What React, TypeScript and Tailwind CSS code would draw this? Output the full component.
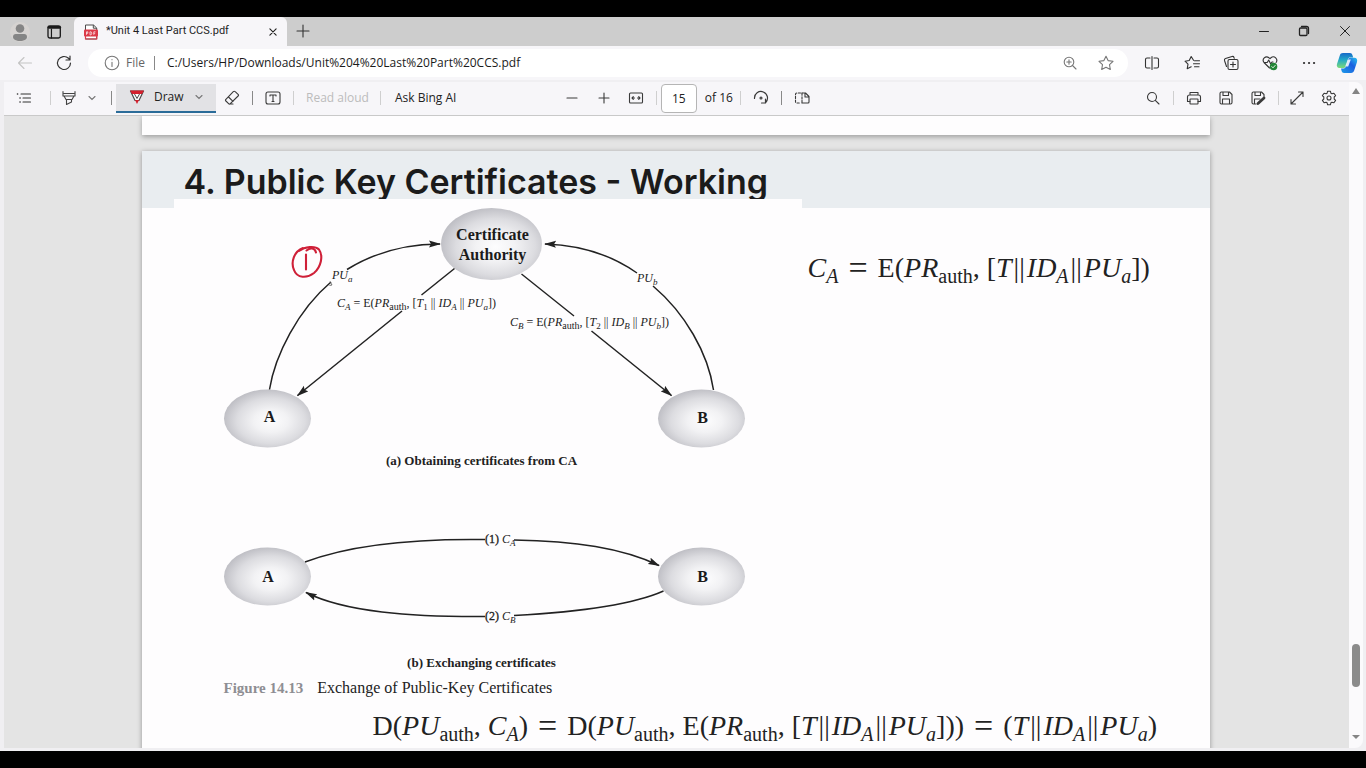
import type { ReactNode } from "react";

const ui = "font-['Open_Sans','Noto_Sans',sans-serif]";
const serif = "font-['Liberation_Serif',serif]";

function Icon({ children, className = "size-4" }: { children: ReactNode; className?: string }) {
  return (
    <svg
      viewBox="0 0 16 16"
      className={className}
      fill="none"
      stroke="currentColor"
      strokeWidth="1.1"
      strokeLinecap="round"
      strokeLinejoin="round"
      aria-hidden="true"
    >
      {children}
    </svg>
  );
}

function IconButton({
  label,
  children,
  className = "w-8 text-[#3a3a3a]",
}: {
  label: string;
  children: ReactNode;
  className?: string;
}) {
  return (
    <button type="button" aria-label={label} className={`flex h-7 shrink-0 items-center justify-center ${className}`}>
      {children}
    </button>
  );
}

function Divider({ className = "mx-1 bg-[#cfcfcf]" }: { className?: string }) {
  return <span className={`h-3.5 w-px shrink-0 ${className}`} />;
}

function Chevron() {
  return (
    <svg viewBox="0 0 8 8" className="size-2" fill="none" stroke="#777" strokeWidth="1.1" strokeLinecap="round" aria-hidden="true">
      <path d="M1 2.5 4 5.5 7 2.5" />
    </svg>
  );
}

function TitleBar() {
  return (
    <header className="flex h-[29px] shrink-0 items-stretch bg-[#cdcdcd]">
      <div className="flex w-[74px] shrink-0 items-center gap-3 pl-[10px]">
        <button type="button" aria-label="Profile">
          <svg viewBox="0 0 20 20" className="size-5" aria-hidden="true">
            <circle cx="10" cy="10" r="10" fill="#d6d3d1" />
            <circle cx="10" cy="6.5" r="4.300" fill="#858585" />
            <path d="M3 15c0-2 1-3 2.800-3h8.400c1.800 0 2.800 1 2.800 3 0 2.400-3 4-7 4s-7-1.600-7-4z" fill="#858585" />
          </svg>
        </button>
        <button type="button" aria-label="Tab actions" className="text-[#1b1b1b]">
          <Icon className="size-6">
            <rect x="4" y="4" width="8.200" height="8" rx="1.200" strokeWidth=".9" />
            <path d="M6.300 6v6" strokeWidth=".8" />
            <path d="M4.600 4.900h7.200" strokeWidth="1.800" />
          </Icon>
        </button>
      </div>
      <div className="flex w-[213px] shrink-0 items-center rounded-t-md bg-[#f7f6f9] pr-2 pl-[10px]">
        <svg viewBox="0 0 14 16" className="h-4 w-3.5 shrink-0" aria-hidden="true">
          <path d="M1.500 1h8l3.200 3v11H1.500z" fill="#fff" stroke="#4a4a4a" strokeWidth="1" />
          <path d="M9.300 1v3.200h3.400" fill="none" stroke="#4a4a4a" strokeWidth="1" />
          <rect x="0" y="5.500" width="14" height="7" rx="1" fill="#dc3a48" />
          <path d="M2.500 10.800v-3h1.300v1.500H2.500M6 7.800v3h.8c1.300 0 1.300-3 0-3zM9.800 10.800v-3h1.700M9.800 9.300h1.400" fill="none" stroke="#fff" strokeWidth=".7" />
          <path d="M1.500 12v3h11.200v-3" fill="none" stroke="#dc3a48" strokeWidth="1.200" />
        </svg>
        <span className="ml-2 grow truncate font-['Roboto',sans-serif] text-[11px] text-[#1f1f1f]">*Unit 4 Last Part CCS.pdf</span>
        <button type="button" aria-label="Close tab" className="flex w-3 justify-center text-[#222]">
          <Icon className="size-2.5">
            <path d="M3 3l10 10M13 3 3 13" strokeWidth="1.800" />
          </Icon>
        </button>
      </div>
      <IconButton label="New tab" className="w-8 text-[#333]">
        <Icon>
          <path d="M8 2v12M2 8h12" />
        </Icon>
      </IconButton>
      <div className="ml-auto flex text-[#222]">
        <IconButton label="Minimize" className="w-10">
          <Icon>
            <path d="M3.500 8.500h9" strokeWidth="1" />
          </Icon>
        </IconButton>
        <IconButton label="Restore" className="w-10">
          <Icon>
            <rect x="3.500" y="5" width="7.500" height="7.500" rx="1" strokeWidth="1.300" />
            <path d="M5.500 3.500h5c1.300 0 2 .7 2 2v5" strokeWidth="1.300" />
          </Icon>
        </IconButton>
        <IconButton label="Close" className="w-[42px]">
          <Icon>
            <path d="M3.500 3.500l9 9M12.500 3.500l-9 9" strokeWidth="1" />
          </Icon>
        </IconButton>
      </div>
    </header>
  );
}

function AddressBar() {
  return (
    <div className="flex h-[34px] shrink-0 items-center bg-[#f7f6f9]">
      <IconButton label="Back" className="ml-[5px] w-10 text-[#c4c4c4]">
        <Icon>
          <path d="M14.500 8h-13M7 2.500 1.500 8 7 13.500" />
        </Icon>
      </IconButton>
      <IconButton label="Refresh" className="w-[38px] text-[#333]">
        <Icon>
          <path d="M14.500 8a6.500 6.500 0 1 1-2-4.700l1.300 1.300M14 1v4h-4" strokeWidth="1.200" />
        </Icon>
      </IconButton>
      <div className="ml-[5px] flex h-7 min-w-0 grow items-center rounded-full bg-white pl-4 text-xs">
        <span className="text-[#777]">
          <Icon>
            <circle cx="8" cy="8" r="6.800" />
            <path d="M8 7.200v4.200M8 4.500v.3" />
          </Icon>
        </span>
        <span className="ml-1.5 text-[#666]">File</span>
        <Divider className="mr-3 ml-[9px] bg-[#888]" />
        <input
          aria-label="Address"
          defaultValue="C:/Users/HP/Downloads/Unit%204%20Last%20Part%20CCS.pdf"
          className="min-w-0 grow bg-transparent text-xs text-[#1b1b1b] outline-none"
        />
        <IconButton label="Zoom" className="w-9 text-[#777]">
          <Icon>
            <circle cx="7" cy="7" r="4.800" />
            <path d="M10.500 10.500 14 14M4.800 7h4.400M7 4.800v4.400" />
          </Icon>
        </IconButton>
        <IconButton label="Add to favorites" className="mr-1 w-9 text-[#777]">
          <Icon>
            <path d="M8 1.200 10.100 5.600l4.900.7-3.500 3.400.8 4.800L8 12.200l-4.300 2.300.8-4.800L1 6.300l4.900-.7z" />
          </Icon>
        </IconButton>
      </div>
      <div className="ml-1 flex">
        <IconButton label="Split screen" className="w-10 text-[#333]">
          <Icon>
            <path d="M6 3H3C2 3 1.500 3.500 1.500 4.500v7c0 1 .5 1.500 1.500 1.500h3M10 3h3c1 0 1.500.5 1.500 1.500v7c0 1-.5 1.500-1.500 1.500h-3M8 1.500v13" />
          </Icon>
        </IconButton>
        <IconButton label="Favorites" className="w-10 text-[#333]">
          <Icon>
            <path d="M9.500 5.300 7.200 1.500 5.200 5.500l-4.200.7 3 3-.8 4.600 4-2M10.500 5.800h5M9.500 8.800h6M10.500 11.800h4.500" />
          </Icon>
        </IconButton>
        <IconButton label="Collections" className="w-[38px] text-[#333]">
          <Icon>
            <rect x="5" y="4.500" width="10" height="10" rx="1.500" />
            <path d="M10 7v5M7.500 9.500h5M3.500 11.500 1.500 5.500C1.200 4.500 1.600 3.800 2.500 3.500l6.500-2c1-.3 1.700.1 2 1l.3.800" />
          </Icon>
        </IconButton>
        <IconButton label="Browser essentials" className="w-10 text-[#333]">
          <Icon>
            <path d="M7.500 13 2 7.500C-.5 4.500 3.500 0 7 2.800l1 .9.900-.9c3.500-2.800 7.500 1.500 5.200 4.700M2.500 7.500h2.700l1.500-2.500 2 4 1.300-2h1" />
            <circle cx="11.500" cy="11.500" r="3.800" fill="#238636" stroke="none" />
            <path d="M9.800 11.600l1.200 1.200 2.200-2.400" stroke="#fff" strokeWidth=".9" />
          </Icon>
        </IconButton>
        <IconButton label="More" className="w-[38px] text-[#333]">
          <Icon>
            <path d="M3 8h.1M8 8h.1M13 8h.1" strokeWidth="2.200" />
          </Icon>
        </IconButton>
        <IconButton label="Copilot" className="w-[38px]">
          <svg viewBox="0 0 22 22" className="size-[22px]" aria-hidden="true">
            <defs>
              <linearGradient id="cpA" x1="0" y1="0" x2="0" y2="1">
                <stop offset="0" stopColor="#1769c9" />
                <stop offset=".45" stopColor="#21a8c8" />
                <stop offset="1" stopColor="#7edb77" />
              </linearGradient>
              <linearGradient id="cpB" x1="0" y1="1" x2="1" y2="0">
                <stop offset="0" stopColor="#1e9be9" />
                <stop offset=".6" stopColor="#1c5fe0" />
                <stop offset="1" stopColor="#27c4f0" />
              </linearGradient>
            </defs>
            <path d="M7 1h7c1.300 0 2 .7 2.400 2l.8 2.600h-3.300c-1 0-1.600.6-1.900 1.600L10 14c-.4 1.300-1 2-2.400 2H3.500C1.300 16 .3 14.300 1 12L3.800 3.400C4.300 1.800 5.300 1 7 1z" fill="url(#cpA)" />
            <path d="M15 21H8c-1.300 0-2-.7-2.400-2L5 16.400h2.800c1 0 1.600-.6 1.900-1.600L12 8c.4-1.300 1-2.200 2.400-2.200h4.100c2.200 0 3.200 1.900 2.500 4.200l-2.800 8.600c-.5 1.600-1.500 2.400-3.200 2.400z" fill="url(#cpB)" />
            <path d="M11.800 7.500h3l-2.600 7h-3z" fill="#fff" opacity=".85" />
          </svg>
        </IconButton>
      </div>
    </div>
  );
}

function PdfToolbar() {
  return (
    <div className="flex h-[35px] items-center border-b border-[#c9c9c9] bg-[#f7f6f9] pr-1 text-xs text-[#222]">
      <div className="flex basis-[41%] items-center whitespace-nowrap">
        <IconButton label="Contents" className="ml-1 w-8 text-[#333]">
          <Icon>
            <path d="M5 4h9.500M7 8h7.500M7 12h7.500" />
            <path d="M1.500 4h.1M4 8h.1M4 12h.1" strokeWidth="1.600" />
          </Icon>
        </IconButton>
        <Divider className="mx-2.5 bg-[#cfcfcf]" />
        <button type="button" aria-label="Highlight" className="flex items-center gap-[11px] text-[#444]">
          <Icon>
            <path d="M2 1.500v4.500h12V1.500M3 6l2 3.500h6L13 6M5.500 9.500v5l5-2.500V9.500M3 3.500h10" />
          </Icon>
          <Chevron />
        </button>
        <Divider className="mr-1 ml-[15px] bg-[#888]" />
        <button type="button" className="flex h-[29px] w-[100px] items-center border-b-2 border-[#2b6c99] bg-[#e2e2e5] pl-[13px]">
          <svg viewBox="0 0 16 16" className="size-4" fill="none" strokeLinejoin="round" aria-hidden="true">
            <path d="M1.500 2h13l-4.500 9.500H6z" fill="#fff" stroke="#4a4a4a" strokeWidth="1.200" />
            <path d="M1 1.500h14L13 5H3z" fill="#d4202d" />
            <path d="M5.500 5 8 9.500 10.500 5" stroke="#4a4a4a" strokeWidth="1" />
            <path d="M6 11h4l-2 4z" fill="#d4202d" />
          </svg>
          <span className="ml-[9px] w-[41px] text-left">Draw</span>
          <Chevron />
        </button>
        <IconButton label="Erase">
          <Icon>
            <path d="M9.300 1.700 1.900 9.300c-.5.5-.5 1.200 0 1.700l2.700 2.700c.5.5 1.200.5 1.700 0l7.800-7.700c.5-.5.5-1.200 0-1.700l-2.900-2.600c-.5-.5-1.400-.5-1.900 0zM4.500 7l4.500 4.300M5 14h4" />
          </Icon>
        </IconButton>
        <Divider className="mx-1 bg-[#888]" />
        <IconButton label="Add text">
          <Icon>
            <rect x="1" y="2" width="14" height="12" rx="2" />
            <path d="M5 6V5h6v1M8 5v6.500M7 11.500h2" />
          </Icon>
        </IconButton>
        <Divider />
        <button type="button" disabled className="ml-2 w-[70px] text-left text-[#bcbcbc]">
          Read aloud
        </button>
        <Divider />
        <button type="button" className="ml-2.5">
          Ask Bing AI
        </button>
      </div>
      <div className="flex shrink-0 items-center pl-0.5">
        <IconButton label="Zoom out">
          <Icon>
            <path d="M3 8h10" />
          </Icon>
        </IconButton>
        <IconButton label="Zoom in">
          <Icon>
            <path d="M3 8h10M8 3v10" />
          </Icon>
        </IconButton>
        <IconButton label="Fit to width">
          <Icon>
            <rect x="1.500" y="3" width="13" height="10" rx="1" />
            <path d="M4 8h2.500M9.500 8H12M5.300 6.700 4 8l1.300 1.300M10.700 6.700 12 8l-1.300 1.300" />
          </Icon>
        </IconButton>
        <Divider />
        <input
          aria-label="Page number"
          defaultValue="15"
          className="h-[29px] w-9 rounded-sm border border-[#b5b5b5] bg-white text-center"
        />
        <span className="w-[39px] pl-2 whitespace-nowrap">of 16</span>
        <Divider />
        <IconButton label="Rotate">
          <Icon>
            <path d="M1.500 8.500a6.500 6.500 0 1 1 11 4.200M12.500 9v4h-4" strokeWidth="1.200" />
            <circle cx="8" cy="8" r="1" />
          </Icon>
        </IconButton>
        <Divider className="mx-1 bg-[#888]" />
        <IconButton label="Page view">
          <Icon>
            <path d="M8 3v10M6.500 3H3C2 3 1.500 3.500 1.500 4.500v7c0 1 .5 1.500 1.500 1.500h3.500" strokeDasharray="2.200 1.500" />
            <path d="M8 3h3.500L15 6.500V12c0 .6-.4 1-1 1H8M11 3v4h4" />
          </Icon>
        </IconButton>
      </div>
      <div className="ml-auto flex shrink-0 items-center">
        <IconButton label="Find">
          <Icon>
            <circle cx="7" cy="7" r="4.500" />
            <path d="M10.300 10.300 14 14" />
          </Icon>
        </IconButton>
        <Divider />
        <IconButton label="Print">
          <Icon>
            <path d="M4 5V2.500h8V5M4 11.500H1.500V7c0-1.300.7-2 2-2h9c1.300 0 2 .7 2 2v4.500H12" />
            <rect x="4" y="9" width="8" height="5" rx=".6" />
          </Icon>
        </IconButton>
        <IconButton label="Save">
          <Icon>
            <path d="M2 3.500C2 2.500 2.500 2 3.500 2h8L14 4.500v8c0 1-.5 1.500-1.500 1.500h-9c-1 0-1.500-.5-1.500-1.500zM5 2v3.500h5.500V2M4.500 14V9h7v5" />
          </Icon>
        </IconButton>
        <IconButton label="Save as">
          <Icon>
            <path d="M6 14H3.500C2.500 14 2 13.500 2 12.500v-9C2 2.500 2.500 2 3.500 2h8L14 4.500v2M5 2v3.500h5.500V2M4.500 14V9H10" />
            <path d="M8 13.500 14 8" strokeWidth="2.800" />
          </Icon>
        </IconButton>
        <Divider className="mr-0.5 ml-1 bg-[#cfcfcf]" />
        <IconButton label="Full screen">
          <Icon>
            <path d="M2 14 14 2M9.500 2H14v4.500M2 9.500V14h4.500" />
          </Icon>
        </IconButton>
        <IconButton label="Settings">
          <Icon>
            <circle cx="8" cy="8" r="2" />
            <path d="M6.600 1.200h2.800l.5 2 1 .6 2-.6 1.700 2.400L13.200 7v2l1.400 1.400-1.700 2.400-2-.6-1 .6-.5 2H6.600l-.5-2-1-.6-2 .6-1.700-2.400L2.800 9V7L1.400 5.600l1.700-2.400 2 .6 1-.6z" />
          </Icon>
        </IconButton>
      </div>
    </div>
  );
}

function Node({ x, y, rx, ry }: { x: number; y: number; rx: number; ry: number }) {
  return <ellipse cx={x} cy={y} rx={rx} ry={ry} fill="url(#nodeFill)" />;
}

function Shared() {
  return (
    <defs>
      <radialGradient id="nodeFill" cx=".54" cy=".54" r=".56">
        <stop offset="0" stopColor="#fdfdfe" />
        <stop offset=".35" stopColor="#f2f2f4" />
        <stop offset=".7" stopColor="#dcdce0" />
        <stop offset="1" stopColor="#bdbdc3" />
      </radialGradient>
      <marker id="arrow" viewBox="0 0 12 8" markerWidth="12" markerHeight="8" refX="11" refY="4" orient="auto" markerUnits="userSpaceOnUse">
        <path d="M0 .5 12 4 0 7.500 2 4z" fill="#222" />
      </marker>
    </defs>
  );
}

function SvgFormula({ x, y, party, index }: { x: number; y: number; party: string; index: string }) {
  return (
    <text x={x} y={y} fontSize="12" fill="#222">
      <tspan fontStyle="italic">C</tspan>
      <tspan fontStyle="italic" fontSize="9" dy="3">{party}</tspan>
      <tspan dy="-3"> = E(</tspan>
      <tspan fontStyle="italic">PR</tspan>
      <tspan fontSize="10" dy="3">auth</tspan>
      <tspan dy="-3">, [</tspan>
      <tspan fontStyle="italic">T</tspan>
      <tspan fontSize="9" dy="3">{index}</tspan>
      <tspan dy="-3"> || </tspan>
      <tspan fontStyle="italic">ID</tspan>
      <tspan fontStyle="italic" fontSize="9" dy="3">{party}</tspan>
      <tspan dy="-3"> || </tspan>
      <tspan fontStyle="italic">PU</tspan>
      <tspan fontStyle="italic" fontSize="9" dy="3">{party === "A" ? "a" : "b"}</tspan>
      <tspan dy="-3">])</tspan>
    </text>
  );
}

function SvgSymbol({ x, y, prefix, base, sub }: { x: number; y: number; prefix?: string; base: string; sub: string }) {
  return (
    <text x={x} y={y} fontSize="12" fill="#222">
      {prefix ? <tspan stroke="#222" strokeWidth=".3">{prefix} </tspan> : null}
      <tspan fontStyle="italic">{base}</tspan>
      <tspan fontStyle="italic" fontSize="9" dy="3">{sub}</tspan>
    </text>
  );
}

function ObtainingDiagram() {
  return (
    <svg viewBox="174 199 628 249" className={`block w-full ${serif}`} role="img" aria-label="Obtaining certificates from CA">
      <Shared />
      <Node x={491.500} y={244} rx={50.500} ry={36} />
      <Node x={267.500} y={418.500} rx={43.500} ry={29} />
      <Node x={701.500} y={418.500} rx={43.500} ry={29} />
      <g fill="none" stroke="#222" strokeWidth="1.500">
        <path d="M269.500 389.500C275 355 298 310 331 282" />
        <path d="M347 269.500C372 254 404 244 440 244" markerEnd="url(#arrow)" />
        <path d="M637 273C610 254 580 245 545 244" markerEnd="url(#arrow)" />
        <path d="M653 286C685 313 708 353 713.500 390" />
        <path d="M454.500 268.500 421.500 295" />
        <path d="M402 311 297.500 395.500" markerEnd="url(#arrow)" />
        <path d="M521.500 274 574 316" />
        <path d="M591.500 331 671.500 395.500" markerEnd="url(#arrow)" />
      </g>
      <path d="M330 281.500l2 3.500-2.500.5" fill="none" stroke="#555" strokeWidth=".8" />
      <g fill="#1b1b1b" fontWeight="bold" textAnchor="middle">
        <text x="492.500" y="240" fontSize="16">Certificate</text>
        <text x="492.500" y="260" fontSize="16">Authority</text>
        <text x="269.500" y="422" fontSize="16">A</text>
        <text x="702.500" y="423" fontSize="16">B</text>
      </g>
      <SvgSymbol x={332} y={279} base="PU" sub="a" />
      <SvgSymbol x={637} y={282} base="PU" sub="b" />
      <SvgFormula x={337} y={307} party="A" index="1" />
      <SvgFormula x={510} y={326} party="B" index="2" />
      <g fill="none" stroke="#cf2038" strokeWidth="2.100" strokeLinecap="round">
        <path d="M303 248C294 251.500 290.500 262 294 270 297 278.500 307 278.500 314 273 321 267 323.500 256 319 249.500 315 245.500 305 246.500 299 251" />
        <path d="M306 254.500V269.500M306.500 250.500C310 247.500 315 247.500 316 252.500" />
      </g>
    </svg>
  );
}

function ExchangingDiagram() {
  return (
    <svg viewBox="174 529 628 96" className={`block w-full ${serif}`} role="img" aria-label="Exchanging certificates">
      <Node x={267.500} y={576.500} rx={43.500} ry={29} />
      <Node x={701.500} y={576.500} rx={43.500} ry={29} />
      <g fill="none" stroke="#222" strokeWidth="1.500">
        <path d="M305 562C347 546 410 538.500 485 539.500" />
        <path d="M514 540C575 541 622 548 659 565.500" markerEnd="url(#arrow)" />
        <path d="M663.500 591C632 605 580 612 514 615.500" />
        <path d="M485 616.500C410 617 345 612 306 592.500" markerEnd="url(#arrow)" />
      </g>
      <g fill="#1b1b1b" fontWeight="bold" textAnchor="middle" fontSize="16">
        <text x="268" y="582">A</text>
        <text x="702.500" y="582">B</text>
      </g>
      <SvgSymbol x={485} y={543} prefix="(1)" base="C" sub="A" />
      <SvgSymbol x={485} y={620} prefix="(2)" base="C" sub="B" />
    </svg>
  );
}

function Sub({ children, upright = false }: { children: ReactNode; upright?: boolean }) {
  return (
    <sub className={`bottom-0 align-[-6px] text-[20px] leading-none ${upright ? "not-italic" : "italic"}`}>{children}</sub>
  );
}

function Parallel() {
  return <span className="mx-0.5 not-italic">||</span>;
}

function Auth({ base }: { base: string }) {
  return (
    <>
      <i>{base}</i>
      <Sub upright>auth</Sub>
    </>
  );
}

function Payload() {
  return (
    <>
      <i>T</i>
      <Parallel />
      <i>ID</i>
      <Sub>A</Sub>
      <Parallel />
      <i>PU</i>
      <Sub>a</Sub>
    </>
  );
}

function Equals() {
  return <span className="mx-[10px] align-[-2px] text-[34px] leading-none">=</span>;
}

function Slide() {
  return (
    <article className="mx-auto w-full max-w-[1068px] shrink-0 bg-[#fefdfe] shadow-[0_1px_5px_rgba(0,0,0,0.35)]">
      <h1 className="h-[57px] bg-[#e9edf0] pt-2.5 pl-[42px] font-['Inter',sans-serif] text-[34px] leading-[42px] font-semibold whitespace-nowrap text-[#1b1b1b]">
        4. Public Key Certificates - Working
      </h1>
      <div className={`flex items-start text-[#222] ${serif}`}>
        <div className="relative -mt-[9px] ml-8 w-[628px] shrink-0 bg-[#fefdfe]">
          <figure>
            <ObtainingDiagram />
            <figcaption className="mt-[3px] pr-3 text-center text-[13px] leading-5 font-bold">(a) Obtaining certificates from CA</figcaption>
          </figure>
          <figure className="mt-[58px]">
            <ExchangingDiagram />
            <figcaption className="mt-7 pr-3 text-center text-[13px] leading-5 font-bold">(b) Exchanging certificates</figcaption>
          </figure>
          <p className="mt-[5px] flex gap-[14px] pl-[50px] text-[16px] leading-5">
            <b className="text-[15px] text-[#8e8e93]">Figure 14.13</b>
            <span>Exchange of Public-Key Certificates</span>
          </p>
        </div>
        <p className="mt-[42px] pl-1.5 text-[28px] leading-9 whitespace-nowrap">
          <i>C</i>
          <Sub>A</Sub>
          <Equals />
          E(
          <Auth base="PR" />, [<Payload />
          ])
        </p>
      </div>
      <p className={`mt-[10px] pb-6 pl-[231px] text-[28px] leading-9 whitespace-nowrap text-[#222] ${serif}`}>
        D(
        <Auth base="PU" />, <i>C</i>
        <Sub>A</Sub>)<Equals />
        D(
        <Auth base="PU" />, E(
        <Auth base="PR" />, [<Payload />
        ]))
        <Equals />(<Payload />)
      </p>
    </article>
  );
}

function ScrollTrack() {
  return (
    <div className="flex w-[14px] shrink-0 flex-col items-center rounded-r-lg bg-[#fbfafc] pt-1.5 pb-2">
      <svg viewBox="0 0 8 6" className="h-1.5 w-2" aria-hidden="true">
        <path d="M4 0 8 6H0z" fill="#858585" />
      </svg>
      <div className="grow-[554]" />
      <div className="h-[43px] w-2 rounded-full bg-[#8b8b8b]" />
      <div className="grow-[47]" />
      <svg viewBox="0 0 8 6" className="h-1.5 w-2" aria-hidden="true">
        <path d="M0 1h8L4 5z" fill="#858585" />
      </svg>
    </div>
  );
}

export default function App() {
  return (
    <div className={`flex h-screen flex-col overflow-hidden bg-black py-[17px] ${ui}`}>
      <TitleBar />
      <AddressBar />
      <div className="flex min-h-0 grow bg-[#f0eff2] pt-0.5 pr-[3px] pb-[3px] pl-1">
        <div className="flex min-w-0 grow flex-col">
          <PdfToolbar />
          <main className="flex min-h-0 grow flex-col gap-4 overflow-hidden bg-[#e4e4e4] pr-0.5">
            <div className="mx-auto h-[19px] w-full max-w-[1068px] shrink-0 bg-[#fefdfe] shadow-[0_2px_5px_rgba(0,0,0,0.3)]" />
            <Slide />
          </main>
        </div>
        <ScrollTrack />
      </div>
    </div>
  );
}
